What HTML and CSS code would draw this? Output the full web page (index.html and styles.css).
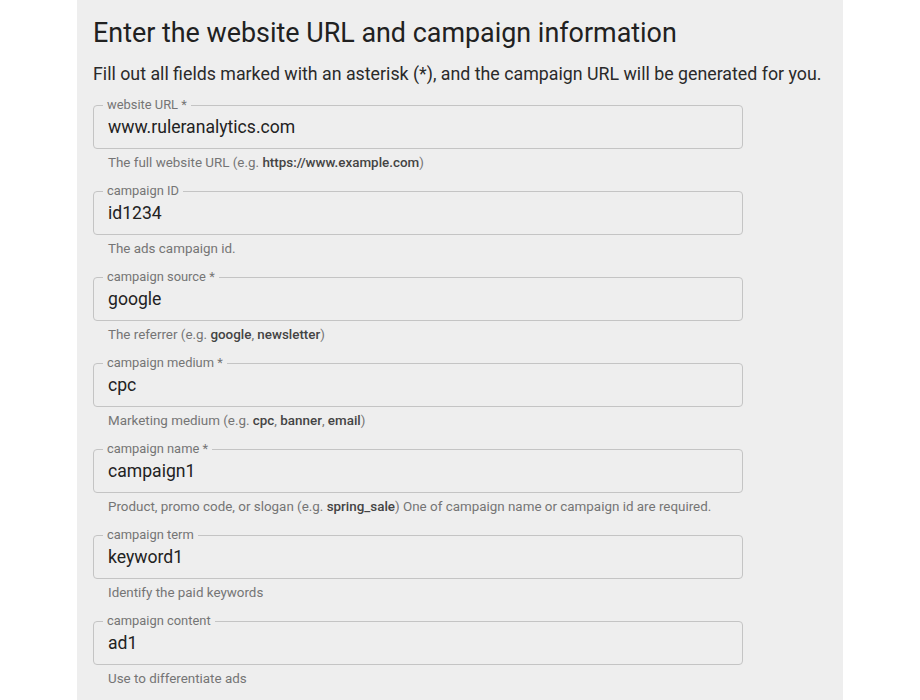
FILE: index.html
```html
<!DOCTYPE html>
<html lang="en">

<head>
    <meta charset="UTF-8">
    <meta name="viewport" content="width=device-width, initial-scale=1.0">
    <title>Campaign URL Builder</title>
    <link rel="stylesheet" href="styles.css">
</head>

<body>
    <div class="panel">
        <h2 class="title">Enter the website URL and campaign information</h2>
        <p class="intro">Fill out all fields marked with an asterisk (*), and the campaign URL will be generated for you.</p>

        <div class="field">
            <fieldset class="box">
                <legend>website URL *</legend>
                <input class="input" type="text" value="www.ruleranalytics.com">
            </fieldset>
            <p class="helper">The full website URL (e.g. <b>https://www.example.com</b>)</p>
        </div>

        <div class="field">
            <fieldset class="box">
                <legend>campaign ID</legend>
                <input class="input" type="text" value="id1234">
            </fieldset>
            <p class="helper">The ads campaign id.</p>
        </div>

        <div class="field">
            <fieldset class="box">
                <legend>campaign source *</legend>
                <input class="input" type="text" value="google">
            </fieldset>
            <p class="helper">The referrer (e.g. <b>google</b>, <b>newsletter</b>)</p>
        </div>

        <div class="field">
            <fieldset class="box">
                <legend>campaign medium *</legend>
                <input class="input" type="text" value="cpc">
            </fieldset>
            <p class="helper">Marketing medium (e.g. <b>cpc</b>, <b>banner</b>, <b>email</b>)</p>
        </div>

        <div class="field">
            <fieldset class="box">
                <legend>campaign name *</legend>
                <input class="input" type="text" value="campaign1">
            </fieldset>
            <p class="helper">Product, promo code, or slogan (e.g. <b>spring_sale</b>) One of campaign name or campaign id are required.</p>
        </div>

        <div class="field">
            <fieldset class="box">
                <legend>campaign term</legend>
                <input class="input" type="text" value="keyword1">
            </fieldset>
            <p class="helper">Identify the paid keywords</p>
        </div>

        <div class="field">
            <fieldset class="box">
                <legend>campaign content</legend>
                <input class="input" type="text" value="ad1">
            </fieldset>
            <p class="helper">Use to differentiate ads</p>
        </div>
    </div>
</body>

</html>
```

FILE: styles.css
```css
* {
    margin: 0;
    padding: 0;
    box-sizing: border-box;
}

body {
    background: #ffffff;
    font-family: Roboto, "Liberation Sans", sans-serif;
}

.panel {
    width: 766px;
    margin-left: 77px;
    min-height: 700px;
    padding: 17px 16px 0;
    background: #eeeeee;
}

.title {
    font-size: 26.9px;
    font-weight: 400;
    line-height: 32px;
    color: #212121;
}

.intro {
    margin-top: 14px;
    font-size: 17.8px;
    line-height: 22px;
    color: #2a2a2a;
}

.field {
    width: 650px;
    height: 86px;
}

.field:first-of-type {
    margin-top: 13px;
}

.box {
    height: 51px;
    border: 1px solid #c4c4c4;
    border-radius: 4px;
    padding: 0 14px;
}

.box legend {
    margin-left: -5px;
    padding: 0 4px;
    font-size: 12.9px;
    line-height: 14px;
    color: #757575;
}

.input {
    display: block;
    width: 100%;
    margin-top: 3px;
    border: none;
    outline: none;
    background: transparent;
    font-family: inherit;
    font-size: 17.6px;
    line-height: 24px;
    color: #222222;
}

.helper {
    margin: 6px 0 0 15px;
    font-size: 13.4px;
    line-height: 16px;
    color: #757575;
}

.helper b {
    font-weight: 500;
    color: #444444;
}
```
